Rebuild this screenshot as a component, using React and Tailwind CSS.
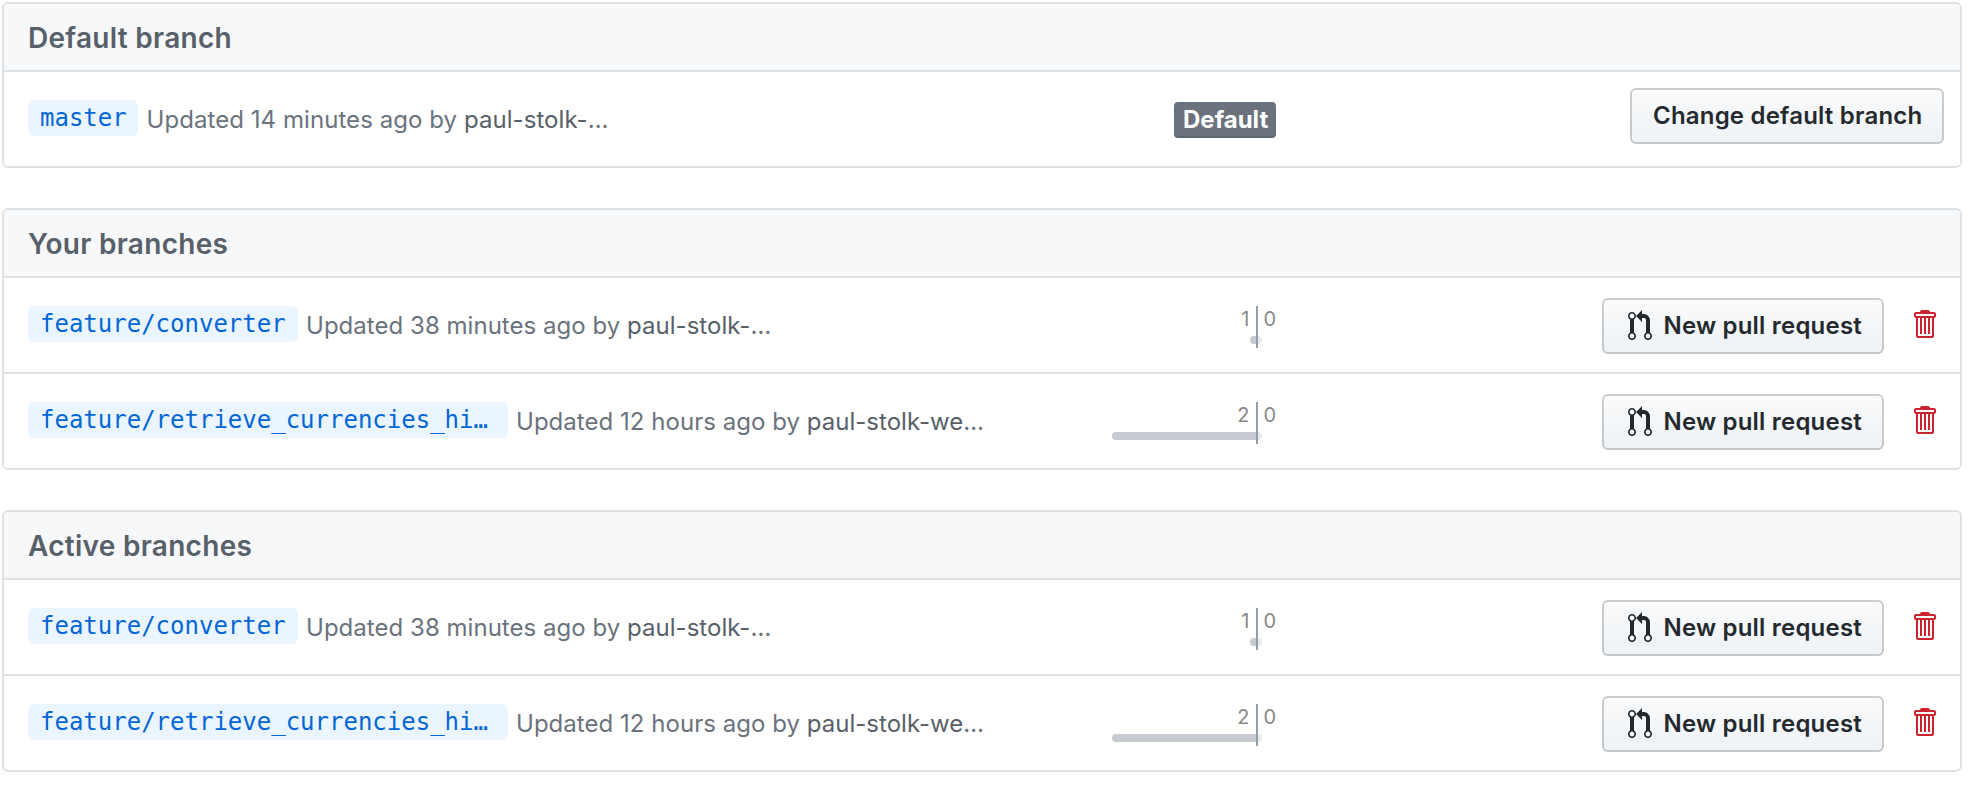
const sections = [
  {
    title: "Default branch",
    rows: [{ name: "master", time: "14 minutes", author: "paul-stolk-", isDefault: true, width: "w-[110px]" }],
  },
  {
    title: "Your branches",
    rows: [
      { name: "feature/converter", time: "38 minutes", author: "paul-stolk-", behind: 1, ahead: 0, bar: 6, width: "w-[270px]" },
      { name: "feature/retrieve_currencies_hi…", time: "12 hours", author: "paul-stolk-we", behind: 2, ahead: 0, bar: 144, width: "w-[480px]" },
    ],
  },
  {
    title: "Active branches",
    rows: [
      { name: "feature/converter", time: "38 minutes", author: "paul-stolk-", behind: 1, ahead: 0, bar: 6, width: "w-[270px]" },
      { name: "feature/retrieve_currencies_hi…", time: "12 hours", author: "paul-stolk-we", behind: 2, ahead: 0, bar: 144, width: "w-[480px]" },
    ],
  },
];

function PullRequestIcon() {
  return (
    <svg className="mt-[10px] h-8 w-6 shrink-0" viewBox="0 0 12 16" fill="currentColor" aria-hidden="true">
      <path fillRule="evenodd" d="M11 11.28V5c-.03-.78-.34-1.47-.94-2.06C9.46 2.35 8.78 2.03 8 2H7V0L4 3l3 3V4h1c.27.02.48.11.69.31.21.2.3.42.31.69v6.28A1.993 1.993 0 0 0 10 15a1.993 1.993 0 0 0 1-3.72zm-1 2.92c-.66 0-1.2-.55-1.2-1.2 0-.65.55-1.2 1.2-1.2.65 0 1.2.55 1.2 1.2 0 .65-.55 1.2-1.2 1.2zM4 3c0-1.11-.89-2-2-2a1.993 1.993 0 0 0-1 3.72v6.56A1.993 1.993 0 0 0 2 15a1.993 1.993 0 0 0 1-3.72V4.72c.59-.34 1-.98 1-1.72zm-.8 10c0 .66-.55 1.2-1.2 1.2-.65 0-1.2-.55-1.2-1.2 0-.65.55-1.2 1.2-1.2.65 0 1.2.55 1.2 1.2zM2 4.2C1.34 4.2.8 3.65.8 3c0-.65.55-1.2 1.2-1.2.65 0 1.2.55 1.2 1.2 0 .65-.55 1.2-1.2 1.2z" />
    </svg>
  );
}

function TrashIcon() {
  return (
    <svg className="h-8 w-6" viewBox="0 0 12 16" fill="currentColor" aria-hidden="true">
      <path fillRule="evenodd" d="M11 2H9c0-.55-.45-1-1-1H5c-.55 0-1 .45-1 1H2c-.55 0-1 .45-1 1v1c0 .55.45 1 1 1v9c0 .55.45 1 1 1h7c.55 0 1-.45 1-1V5c.55 0 1-.45 1-1V3c0-.55-.45-1-1-1zm-1 12H3V5h1v8h1V5h1v8h1V5h1v8h1V5h1v9zm1-10H2V3h9v1z" />
    </svg>
  );
}

const button =
  "flex h-14 rounded-[6px] border-2 border-[rgba(27,31,35,0.2)] bg-[linear-gradient(-180deg,#fafbfc_0%,#eff3f6_90%)] bg-origin-border text-2xl font-semibold leading-[51px] tracking-[0.2px] whitespace-nowrap text-[#24292e]";

function Divergence({ behind, ahead, bar }) {
  return (
    <div className="mt-7 flex h-[42px] text-xl leading-[26px] text-[#888888]">
      <div className="flex w-[168px] flex-col items-end">
        <span className="h-[30px] pr-[6.5px]">{behind}</span>
        <div className="h-2 rounded-l-[4px] bg-[#c6cbd1]" style={{ width: bar }} />
      </div>
      <div className="flex flex-col border-l-2 border-[#959da5]">
        <span className="h-[30px] pl-[5.5px]">{ahead}</span>
        <div className="h-2 w-1 rounded-r-[4px] bg-[#e9eaef]" />
      </div>
    </div>
  );
}

function BranchRow({ row }) {
  return (
    <div className="flex h-24 items-start border-t-2 border-[#dfe2e5]">
      <div className="flex w-[1084px] items-start pl-6">
        <a
          className={`mt-7 h-9 rounded-[6px] bg-[#eaf5ff] px-3 font-['DejaVu_Sans_Mono',monospace] text-2xl leading-9 whitespace-nowrap text-[#0366d6] ${row.width}`}
        >
          {row.name}
        </a>
        <p
          className={`h-[94px] text-2xl leading-[96px] whitespace-nowrap text-[#6a737d] ${row.isDefault ? "ml-[8.5px] tracking-[0.06px]" : "ml-2 tracking-[0.03px]"}`}
        >
          Updated {row.time} ago by <span className="text-[#586069]">{row.author}</span>
          <span className="tracking-[-0.5px]">…</span>
        </p>
      </div>
      {row.isDefault ? (
        <span className="mt-[30px] ml-[86px] h-9 w-[102px] rounded-[4px] bg-[#6a737d] pl-[9px] text-2xl leading-[35px] font-bold text-white shadow-[inset_0_-2px_0_rgba(27,31,35,0.12)]">
          Default
        </span>
      ) : (
        <Divergence behind={row.behind} ahead={row.ahead} bar={row.bar} />
      )}
      {row.isDefault ? (
        <button className={`${button} mt-4 mr-4 ml-auto w-[314px] pl-[21px]`}>Change default branch</button>
      ) : (
        <div className="mr-6 ml-auto flex gap-7">
          <button className={`${button} mt-5 w-[282px] gap-[11.5px] pl-6`}>
            <PullRequestIcon />
            New pull request
          </button>
          <button className="mt-[30px] h-8 text-[#cb2431]" aria-label="Delete branch">
            <TrashIcon />
          </button>
        </div>
      )}
    </div>
  );
}

export default function App() {
  return (
    <main className="flex min-h-[790px] w-[1970px] flex-col gap-10 bg-white pt-[2px] pr-2 pl-[2px] font-[Inter,sans-serif]">
      {sections.map((section) => (
        <section key={section.title} className="overflow-hidden rounded-[6px] border-2 border-[#dfe2e5]">
          <h2 className="h-[66px] bg-[#f6f8fa] pl-6 text-[28px] leading-[69px] font-semibold tracking-[0.28px] text-[#586069]">
            {section.title}
          </h2>
          {section.rows.map((row) => (
            <BranchRow key={row.name} row={row} />
          ))}
        </section>
      ))}
    </main>
  );
}
